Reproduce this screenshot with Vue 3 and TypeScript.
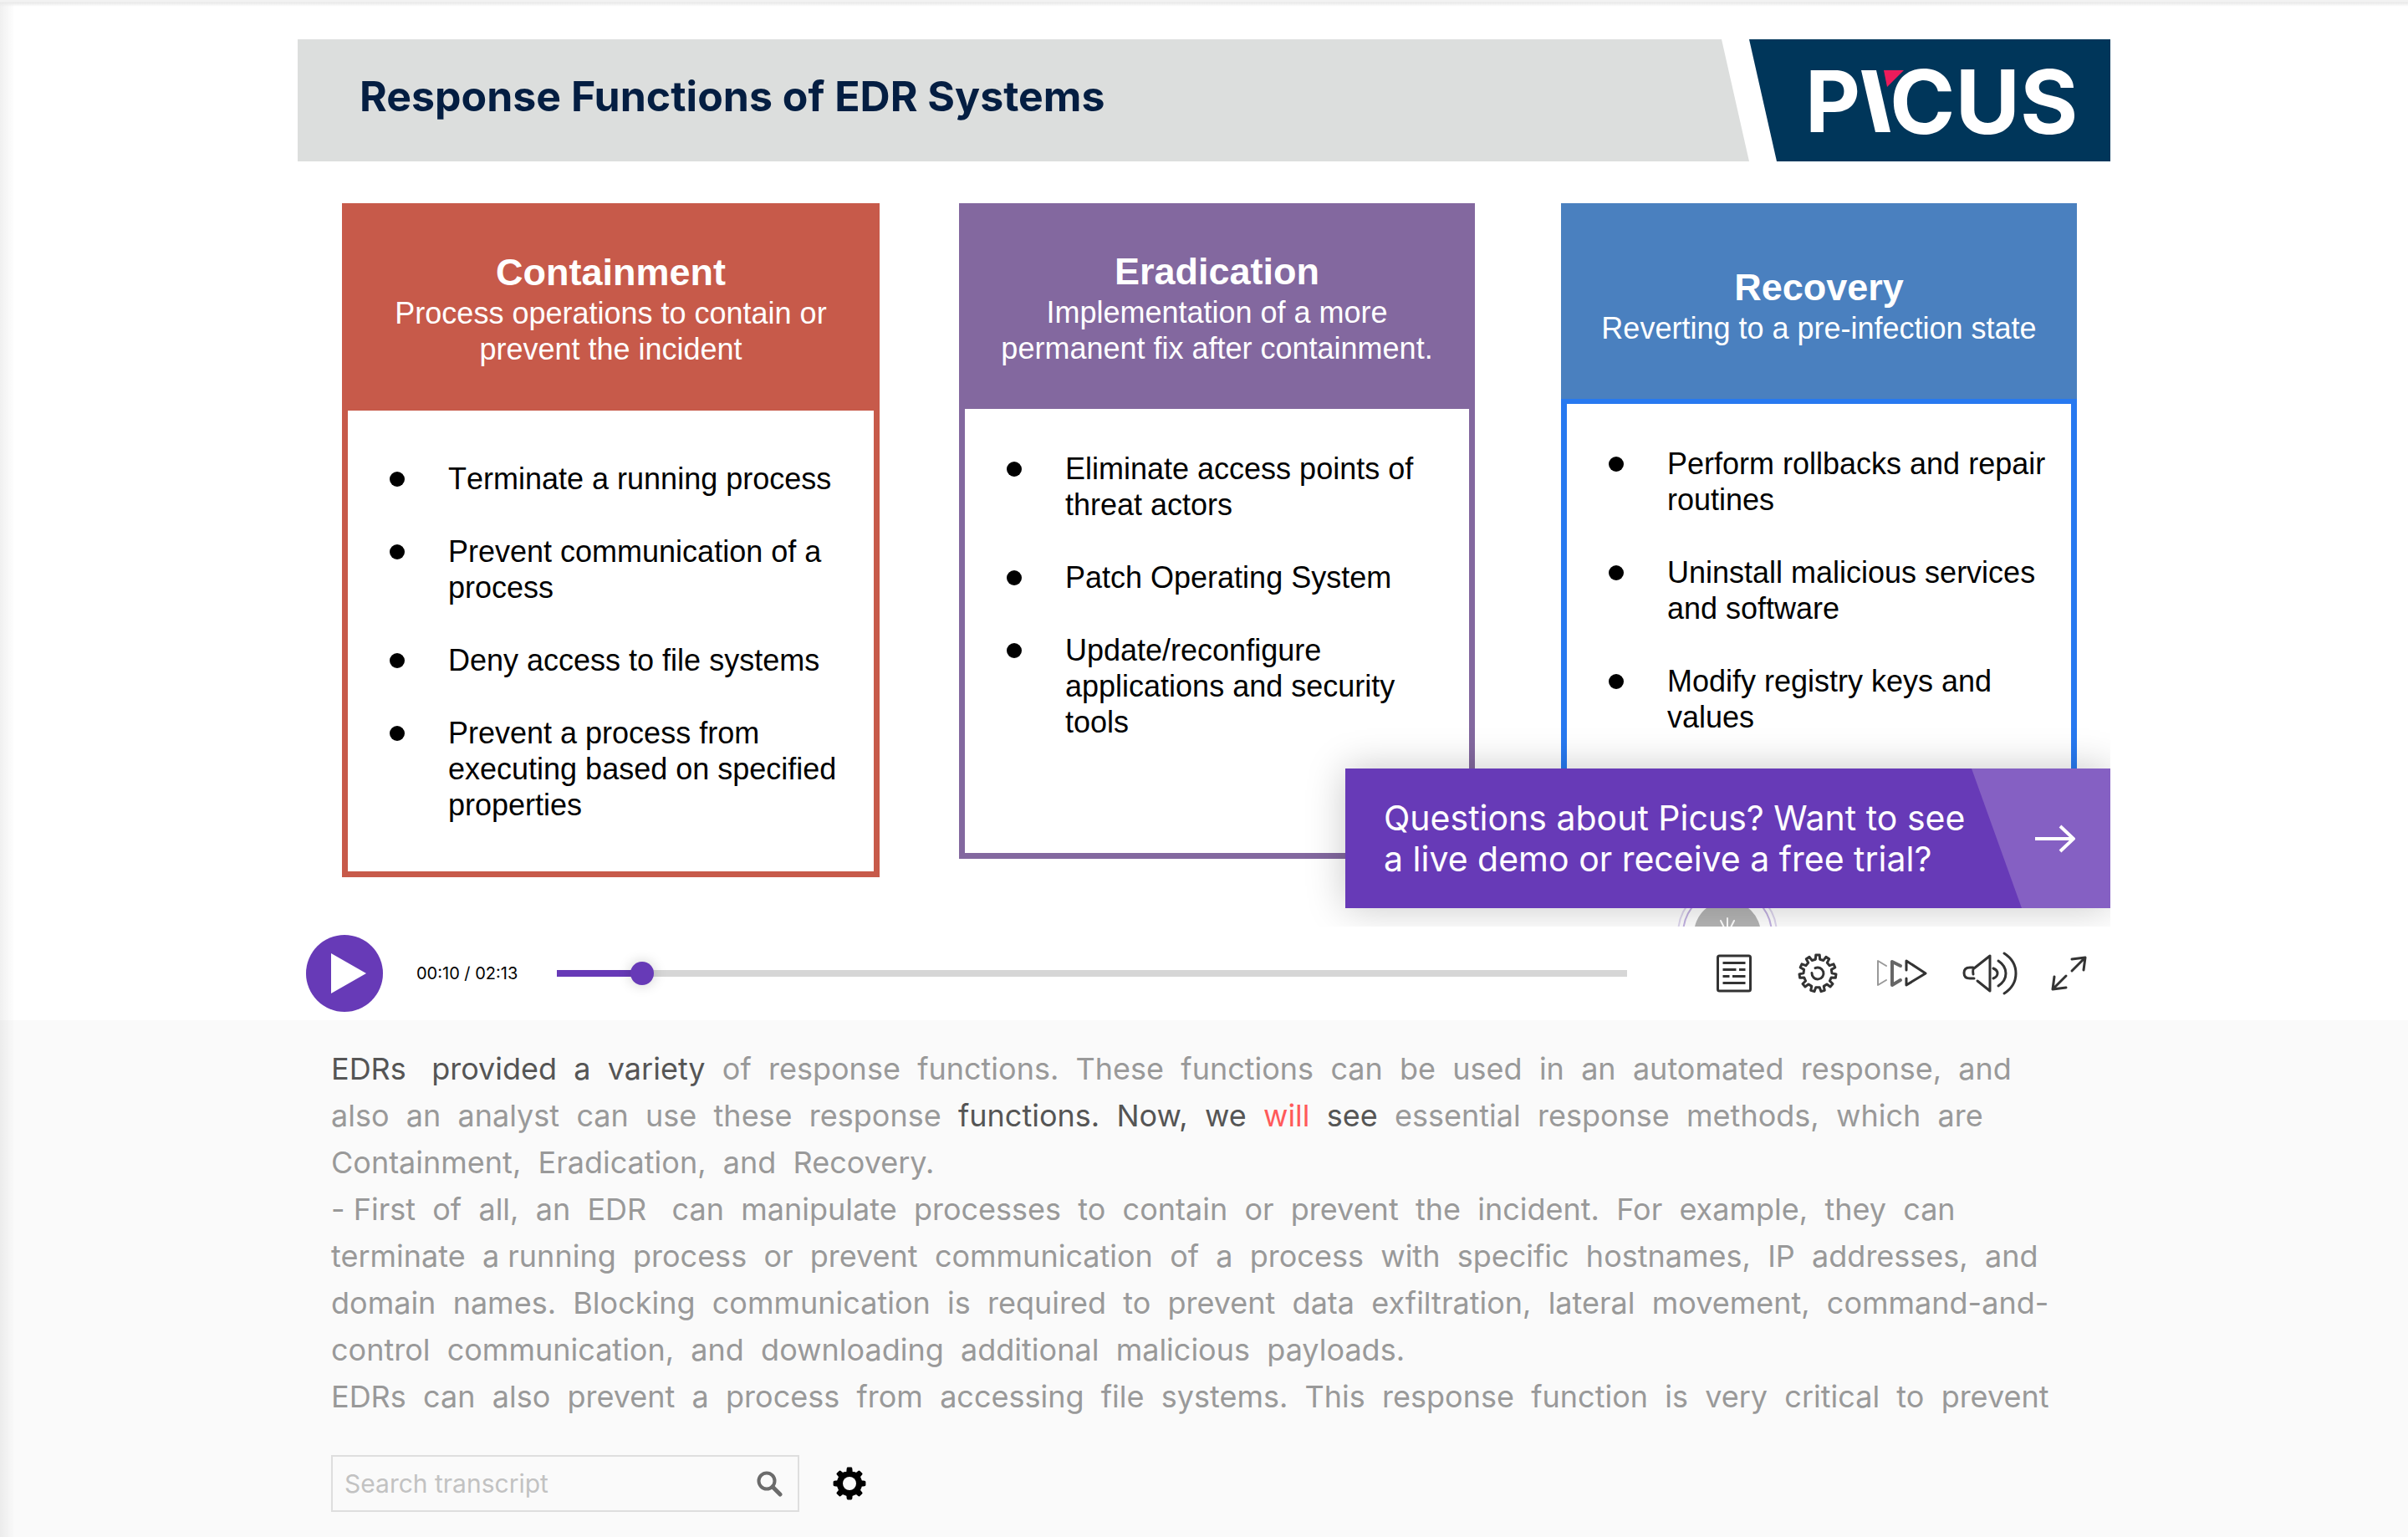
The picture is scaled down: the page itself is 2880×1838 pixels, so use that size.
<script setup lang="ts">
import { computed, ref } from 'vue'

interface Card {
  id: string
  title: string
  summary: string
  items: string[]
}

const cards: Card[] = [
  {
    id: 'containment',
    title: 'Containment',
    summary: 'Process operations to contain or prevent the incident',
    items: [
      'Terminate a running process',
      'Prevent communication of a process',
      'Deny access to file systems',
      'Prevent a process from executing based on specified properties',
    ],
  },
  {
    id: 'eradication',
    title: 'Eradication',
    summary: 'Implementation of a more permanent fix after containment.',
    items: [
      'Eliminate access points of threat actors',
      'Patch Operating System',
      'Update/reconfigure applications and security tools',
    ],
  },
  {
    id: 'recovery',
    title: 'Recovery',
    summary: 'Reverting to a pre-infection state',
    items: [
      'Perform rollbacks and repair routines',
      'Uninstall malicious services and software',
      'Modify registry keys and values',
    ],
  },
]

type Tone = 'plain' | 'heard' | 'current'
interface Run {
  text: string
  tone: Tone
}

const transcript: Run[][] = [
  [
    { text: 'EDRs   provided  a  variety  ', tone: 'heard' },
    {
      text: 'of  response  functions.  These  functions  can  be  used  in  an  automated  response,  and  also  an  analyst  can  use  these  response  ',
      tone: 'plain',
    },
    { text: 'functions.  Now,  we  ', tone: 'heard' },
    { text: 'will  ', tone: 'current' },
    { text: 'see  ', tone: 'heard' },
    {
      text: 'essential  response  methods,  which  are  Containment,  Eradication,  and  Recovery.',
      tone: 'plain',
    },
  ],
  [
    {
      text: '- First  of  all,  an  EDR   can  manipulate  processes  to  contain  or  prevent  the  incident.  For  example,  they  can  terminate  a running  process  or  prevent  communication  of  a  process  with  specific  hostnames,  IP  addresses,  and  domain  names.  Blocking  communication  is  required  to  prevent  data  exfiltration,  lateral  movement,  command-and-control  communication,  and  downloading  additional  malicious  payloads.',
      tone: 'plain',
    },
  ],
  [
    {
      text: 'EDRs  can  also  prevent  a  process  from  accessing  file  systems.  This  response  function  is  very  critical  to  prevent',
      tone: 'plain',
    },
  ],
]

// Each word keeps the gap after it; a hyphen also ends a piece, so lines may break there.
const paragraphs: Run[][] = transcript.map((runs) =>
  runs.flatMap(({ text, tone }) => (text.match(/[^\s-]*-?\s*/g) ?? []).filter(Boolean).map((piece) => ({ text: piece, tone }))),
)

const duration = 133
const position = ref(9.3)
const query = ref('')

const clock = (seconds: number): string => {
  const whole = Math.ceil(seconds)
  const pad = (n: number) => String(n).padStart(2, '0')
  return `${pad(Math.floor(whole / 60))}:${pad(whole % 60)}`
}

const timeLabel = computed(() => `${clock(position.value)} / ${clock(duration)}`)
const played = computed(() => `${(position.value / duration) * 100 + 1}%`)

// Outline of a cog wheel centred on (c, c).
const cog = (teeth: number, c: number, outer: number, inner: number, tip: number, root: number): string => {
  const step = (Math.PI * 2) / teeth
  const points: string[] = []
  for (let i = 0; i < teeth; i++) {
    const mid = i * step - Math.PI / 2
    const corners: [number, number][] = [
      [inner, mid - root * step],
      [outer, mid - tip * step],
      [outer, mid + tip * step],
      [inner, mid + root * step],
    ]
    for (const [r, a] of corners) {
      points.push(`${(c + r * Math.cos(a)).toFixed(2)} ${(c + r * Math.sin(a)).toFixed(2)}`)
    }
  }
  return `M${points.join('L')}Z`
}

const outlineCog = cog(11, 24, 22, 17, 0.18, 0.27)
const solidCog = cog(8, 20, 18, 14, 0.13, 0.2)
</script>

<template>
  <main class="page">
    <section class="player">
      <div class="slide">
        <header class="slide-head">
          <div class="slide-title">
            <h1>Response Functions of EDR Systems</h1>
          </div>
          <div class="brand">
            <svg viewBox="0 0 432 146" role="img" aria-label="Picus">
              <text class="brand-p" x="67" y="111">P</text>
              <text class="brand-cus" x="168" y="113">CUS</text>
              <path d="M134 37h18l17 74h-18z" fill="#fff" />
              <path d="M161 37h24l-20 20z" fill="#ed1c5b" />
            </svg>
          </div>
        </header>

        <div class="cards">
          <article v-for="card in cards" :key="card.id" class="card" :class="card.id">
            <header class="card-head">
              <h2>{{ card.title }}</h2>
              <p>{{ card.summary }}</p>
            </header>
            <ul class="card-body">
              <li v-for="item in card.items" :key="item">{{ item }}</li>
            </ul>
          </article>
        </div>

        <svg class="badge" viewBox="0 0 124 124" aria-hidden="true">
          <circle cx="62" cy="62" r="59" fill="none" stroke="#ddd5ee" stroke-width="2" />
          <circle cx="62" cy="62" r="53" fill="none" stroke="#c3b2e2" stroke-width="2" />
          <circle cx="62" cy="62" r="40" fill="#b5b5b5" />
          <path d="M62 55v-12M58 54l-4-8M66 54l4-8" fill="none" stroke="#fff" stroke-width="2" stroke-linecap="round" />
        </svg>

        <a class="offer" href="#demo">
          <span class="offer-text">Questions about Picus? Want to see<br />a live demo or receive a free trial?</span>
          <span class="offer-arrow">
            <svg viewBox="0 0 48 36" width="48" height="36" aria-hidden="true">
              <path d="M0 18h46M30 3l16 15l-16 15" fill="none" stroke="#fff" stroke-width="4" />
            </svg>
          </span>
        </a>
      </div>

      <div class="controls">
        <button class="play" type="button" aria-label="Play">
          <svg viewBox="0 0 92 92" width="92" height="92" aria-hidden="true">
            <path d="M30 22l42 24l-42 24z" fill="#fff" />
          </svg>
        </button>
        <span class="time">{{ timeLabel }}</span>
        <input
          v-model.number="position"
          class="seek"
          type="range"
          min="0"
          :max="duration"
          step="0.1"
          aria-label="Seek"
          :style="{ '--played': played }"
        />
        <div class="tools">
          <button type="button" aria-label="Transcript">
            <svg viewBox="0 0 48 48" width="48" height="48" aria-hidden="true">
              <rect x="4.500" y="3" width="39" height="42" rx="2" />
              <path d="M10.500 11.500h27M10.500 19.500h16M30 19.500h7.500M10.500 27.500h8M22 27.500h15.500M10.500 35.500h27" stroke-linecap="butt" />
            </svg>
          </button>
          <button type="button" aria-label="Settings">
            <svg viewBox="0 0 48 48" width="48" height="48" aria-hidden="true">
              <path :d="outlineCog" />
              <path d="M21 17.600a7 7 0 1 1 -4 6" />
            </svg>
          </button>
          <button type="button" aria-label="Speed">
            <svg viewBox="0 0 64 48" width="64" height="48" aria-hidden="true">
              <path d="M14 15l-10-6v29l10-6" stroke="#999" stroke-width="2" />
              <path d="M31 15l-10-5v28l10-6" stroke="#666" stroke-width="4" />
              <path d="M38 20v-11l23 15l-23 14v-8" />
            </svg>
          </button>
          <button type="button" aria-label="Volume">
            <svg viewBox="-10 0 78 56" width="78" height="56" aria-hidden="true">
              <path d="M16 34h-5q-7 0 -7-6.500q0-6.500 7-6.500h4M15 29q-1-6 1-7L35 7v42L20 37" />
              <path d="M39 22q5 2 5 6t-5 6M45 13q9 6 9 15t-9 15M52 4q14 9 14 24t-14 24" />
            </svg>
          </button>
          <button type="button" aria-label="Full screen">
            <svg viewBox="0 0 48 48" width="48" height="48" aria-hidden="true">
              <path d="M28 21l16-16M28 7l16-2l-2 15M21 27l-16 16M7 28l-2 15l16-2" />
            </svg>
          </button>
        </div>
      </div>
    </section>

    <section class="transcript">
      <div class="transcript-inner">
        <div class="words">
          <p v-for="(words, i) in paragraphs" :key="i">
            <span v-for="(word, j) in words" :key="j" class="word" :class="word.tone">{{ word.text }}</span>
          </p>
        </div>
        <form class="search-row" @submit.prevent>
          <label class="search">
            <input v-model="query" type="text" placeholder="Search transcript" aria-label="Search transcript" />
            <svg viewBox="0 0 32 32" width="32" height="32" aria-hidden="true">
              <circle cx="13" cy="13" r="9.500" fill="none" stroke="#6b6b6b" stroke-width="4" />
              <path d="M20 20l9 9" stroke="#6b6b6b" stroke-width="5" stroke-linecap="round" />
            </svg>
          </label>
          <button class="options" type="button" aria-label="Transcript options">
            <svg viewBox="0 0 40 40" width="40" height="40" aria-hidden="true">
              <path :d="solidCog" fill="#000" stroke="#000" stroke-width="3" stroke-linejoin="round" />
              <circle cx="20" cy="20" r="8" fill="#fafafa" />
            </svg>
          </button>
        </form>
      </div>
    </section>
  </main>
</template>

<style>
body {
  margin: 0;
  background: #fafafa;
}
</style>

<style scoped>
.page {
  position: relative;
  display: flex;
  flex-direction: column;
  min-height: 100vh;
  background: #fff;
  font-family: Inter, 'Liberation Sans', sans-serif;
}

.page::before,
.page::after {
  content: '';
  position: absolute;
  top: 0;
  left: 0;
  pointer-events: none;
}

.page::before {
  width: 18px;
  height: 100%;
  background: linear-gradient(to right, rgba(0, 0, 0, 0.06), rgba(0, 0, 0, 0));
}

.page::after {
  width: 100%;
  height: 8px;
  background: linear-gradient(to bottom, #f2f2f2 2px, #e9e9e9 3px, rgba(255, 255, 255, 0));
}

h1,
h2,
p,
ul {
  margin: 0;
  padding: 0;
}

button {
  padding: 0;
  border: 0;
  background: none;
  cursor: pointer;
}

svg {
  display: block;
}

.player {
  width: calc(100% - 80px);
  max-width: 2168px;
  margin: 0 auto;
}

.slide {
  position: relative;
  overflow: hidden;
  padding: 47px 0 59px;
  font-family: 'Liberation Sans', Arial, sans-serif;
}

.slide-head {
  display: flex;
  height: 146px;
}

.slide-title {
  flex: 1;
  display: flex;
  align-items: center;
  padding: 0 74px 10px;
  background: #dcdedd;
  clip-path: polygon(0 0, calc(100% - 33px) 0, 100% 100%, 0 100%);
}

.slide-title h1 {
  color: #041e42;
  font: 700 50px/64px Inter, sans-serif;
}

.brand {
  width: 432px;
  background: #00365a;
  clip-path: polygon(0 0, 100% 0, 100% 100%, 33px 100%);
}

.brand-p,
.brand-cus {
  fill: #fff;
  font: 700 102px Inter, sans-serif;
}

.brand-cus {
  font-size: 106px;
}

.cards {
  display: flex;
  align-items: flex-start;
  padding: 50px 40px 0 53px;
}

.card {
  flex: 617 1 0;
}

.containment {
  flex-grow: 643;
  margin-right: 95px;
  --head: #c75a4a;
  --edge: #c75a4a;
}

.eradication {
  margin-right: 103px;
  --head: #83689f;
  --edge: #83689f;
}

.recovery {
  --head: #4a80bf;
  --edge: #2779f0;
}

.card-head {
  box-sizing: border-box;
  display: flex;
  flex-direction: column;
  justify-content: center;
  min-height: 248px;
  padding: 4px 32px 0;
  background: var(--head);
  color: #fff;
  text-align: center;
}

.eradication .card-head {
  min-height: 246px;
}

.recovery .card-head {
  min-height: 234px;
  padding-top: 10px;
}

.card-head h2 {
  font-size: 45px;
  line-height: 54px;
}

.card-head p {
  font-size: 36px;
  line-height: 43px;
}

.card-body {
  display: flex;
  flex-direction: column;
  gap: 44px;
  padding: 60px 24px 58px 120px;
  border: 7px solid var(--edge);
  border-top: 0;
  list-style: none;
  color: #000;
  font-size: 36px;
  font-kerning: none;
  line-height: 43px;
}

.eradication .card-body {
  padding-top: 50px;
  padding-bottom: 135px;
}

.recovery .card-body {
  padding-top: 50px;
  padding-bottom: 141px;
  border-top: 6px solid var(--edge);
}

.card-body li {
  position: relative;
}

.card-body li::before {
  content: '';
  position: absolute;
  top: 13px;
  left: -70px;
  width: 18px;
  height: 18px;
  border-radius: 50%;
  background: #000;
}

.badge {
  position: absolute;
  right: 396px;
  bottom: -71px;
  width: 124px;
  height: 124px;
}

.offer {
  position: absolute;
  right: 0;
  bottom: 22px;
  display: flex;
  width: 915px;
  height: 167px;
  background: #673ab7;
  box-shadow: 0 0 44px rgba(0, 0, 0, 0.22);
  color: #fff;
  font: 400 41px/49px Inter, sans-serif;
  text-decoration: none;
}

.offer-text {
  flex: 1;
  align-self: center;
  padding-left: 46px;
  white-space: nowrap;
}

.offer-arrow {
  display: flex;
  align-items: center;
  justify-content: flex-end;
  box-sizing: border-box;
  width: 166px;
  padding-right: 42px;
  background: #8560c3;
  clip-path: polygon(0 0, 100% 0, 100% 100%, 60px 100%);
}

.controls {
  display: flex;
  align-items: center;
  height: 112px;
  padding-left: 10px;
}

.play {
  border-radius: 50%;
  background: #673ab7;
}

.time {
  width: 168px;
  margin-left: 40px;
  color: #000;
  font-size: 20px;
  line-height: 24px;
  white-space: nowrap;
}

.seek {
  flex: 1;
  height: 28px;
  margin: 0;
  appearance: none;
  background: linear-gradient(to right, #673ab7 var(--played), #d6d6d6 var(--played)) center / 100% 8px no-repeat;
}

.seek::-webkit-slider-thumb {
  appearance: none;
  width: 28px;
  height: 28px;
  border-radius: 50%;
  background: #673ab7;
  box-shadow: 0 0 16px rgba(0, 0, 0, 0.2);
}

.tools {
  display: grid;
  grid-template-columns: repeat(5, 100px);
  align-items: center;
  justify-items: center;
  margin-left: 78px;
}

.tools svg {
  fill: none;
  stroke: #333;
  stroke-width: 3;
  stroke-linecap: round;
  stroke-linejoin: round;
}

.transcript {
  flex: 1;
  background: #fafafa;
}

.transcript-inner {
  box-sizing: border-box;
  width: calc(100% - 80px);
  max-width: 2168px;
  margin: 0 auto;
  padding: 30px 40px;
}

.words {
  color: #999;
  font-size: 36px;
  line-height: 56px;
}

.word {
  display: inline-block;
  white-space: pre;
}

.heard {
  color: #555;
}

.current {
  color: #ff5a5a;
}

.search-row {
  display: flex;
  align-items: center;
  gap: 40px;
  margin-top: 42px;
}

.search {
  box-sizing: border-box;
  display: flex;
  align-items: center;
  width: 560px;
  height: 68px;
  padding: 0 18px 0 14px;
  border: 2px solid #dedede;
}

.search input {
  flex: 1;
  min-width: 0;
  padding: 0;
  border: 0;
  outline: 0;
  background: none;
  color: #333;
  font: 400 30px/40px Inter, sans-serif;
}

.search input::placeholder {
  color: #c2c2c2;
}
</style>
